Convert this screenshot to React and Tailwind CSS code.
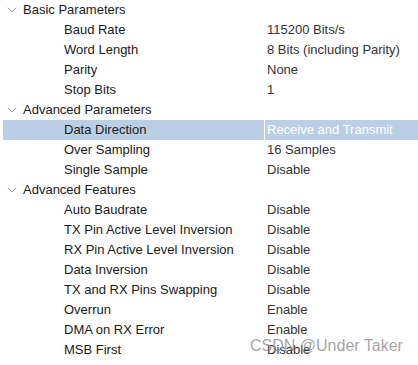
const GROUPS = [
  {
    title: "Basic Parameters",
    rows: [
      ["Baud Rate", "115200 Bits/s"],
      ["Word Length", "8 Bits (including Parity)"],
      ["Parity", "None"],
      ["Stop Bits", "1"],
    ],
  },
  {
    title: "Advanced Parameters",
    rows: [
      ["Data Direction", "Receive and Transmit", true],
      ["Over Sampling", "16 Samples"],
      ["Single Sample", "Disable"],
    ],
  },
  {
    title: "Advanced Features",
    rows: [
      ["Auto Baudrate", "Disable"],
      ["TX Pin Active Level Inversion", "Disable"],
      ["RX Pin Active Level Inversion", "Disable"],
      ["Data Inversion", "Disable"],
      ["TX and RX Pins Swapping", "Disable"],
      ["Overrun", "Enable"],
      ["DMA on RX Error", "Enable"],
      ["MSB First", "Disable"],
    ],
  },
];

function Chevron() {
  return (
    <svg width="10" height="6" viewBox="0 0 10 6" className="shrink-0">
      <path d="M1 0.8 L5 4.8 L9 0.8" fill="none" stroke="#8a8a8a" strokeWidth="1" />
    </svg>
  );
}

function Row({ label, value, selected }) {
  return (
    <div className="flex h-5 pl-[3px] leading-5">
      <div className={`w-[261px] shrink-0 pl-[61px] whitespace-nowrap text-[#1a1a1a] ${selected ? "bg-[#bacfe5]" : ""}`}>
        {label}
      </div>
      <div className={`flex-1 border-l border-white pl-[2px] whitespace-nowrap ${selected ? "bg-[#bacfe5] text-white" : "text-[#333]"}`}>
        {value}
      </div>
    </div>
  );
}

export default function App() {
  return (
    <div className="relative w-[418px] h-[365px] bg-white overflow-hidden text-[13px] font-['Liberation_Sans',Arial,sans-serif]">
      {GROUPS.map(g => (
        <div key={g.title}>
          <div className="flex h-5 items-center pl-[7px] leading-5 text-[#1a1a1a]">
            <Chevron />
            <span className="ml-[6px]">{g.title}</span>
          </div>
          {g.rows.map(([l, v, s]) => (
            <Row key={l} label={l} value={v} selected={s} />
          ))}
        </div>
      ))}
      <div className="absolute left-[250px] top-[336px] text-[16px] leading-5 text-[#8c8c8c]/80 whitespace-nowrap">
        CSDN @Under Taker
      </div>
    </div>
  );
}
